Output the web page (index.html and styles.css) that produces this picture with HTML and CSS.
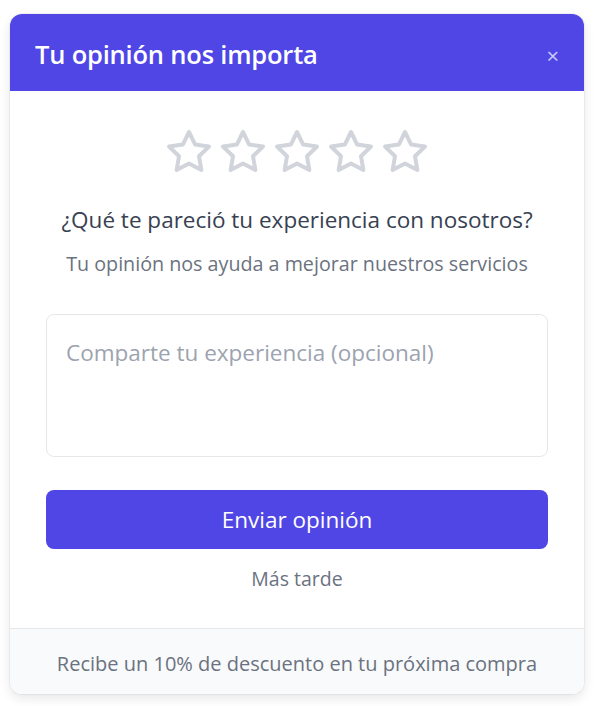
FILE: index.html
```html
<!DOCTYPE html>
<html lang="es">
<head>
<meta charset="utf-8">
<link rel="stylesheet" href="styles.css">
</head>
<body>
<div class="page">
  <div class="card">
    <div class="header">
      <h1 class="title">Tu opinión nos importa</h1>
      <button class="close" aria-label="Cerrar">×</button>
    </div>
    <div class="body">
      <div class="stars">
        <svg class="star" viewBox="0 0 24 24"><polygon points="12 2 15.09 8.26 22 9.27 17 14.14 18.18 21.02 12 17.77 5.82 21.02 7 14.14 2 9.27 8.91 8.26 12 2"/></svg>
        <svg class="star" viewBox="0 0 24 24"><polygon points="12 2 15.09 8.26 22 9.27 17 14.14 18.18 21.02 12 17.77 5.82 21.02 7 14.14 2 9.27 8.91 8.26 12 2"/></svg>
        <svg class="star" viewBox="0 0 24 24"><polygon points="12 2 15.09 8.26 22 9.27 17 14.14 18.18 21.02 12 17.77 5.82 21.02 7 14.14 2 9.27 8.91 8.26 12 2"/></svg>
        <svg class="star" viewBox="0 0 24 24"><polygon points="12 2 15.09 8.26 22 9.27 17 14.14 18.18 21.02 12 17.77 5.82 21.02 7 14.14 2 9.27 8.91 8.26 12 2"/></svg>
        <svg class="star" viewBox="0 0 24 24"><polygon points="12 2 15.09 8.26 22 9.27 17 14.14 18.18 21.02 12 17.77 5.82 21.02 7 14.14 2 9.27 8.91 8.26 12 2"/></svg>
      </div>
      <p class="question">¿Qué te pareció tu experiencia con nosotros?</p>
      <p class="sub">Tu opinión nos ayuda a mejorar nuestros servicios</p>
      <textarea class="comment" placeholder="Comparte tu experiencia (opcional)"></textarea>
      <button class="submit">Enviar opinión</button>
      <button class="later">Más tarde</button>
    </div>
    <div class="footer">Recibe un 10% de descuento en tu próxima compra</div>
  </div>
</div>
</body>
</html>
```
FILE: styles.css
```css
* { box-sizing: border-box; }
html, body {
  margin: 0;
  padding: 0;
  background: #ffffff;
  font-family: "Open Sans", "Noto Sans", sans-serif;
}
.page {
  padding: 14px 16px 12px 10px;
}
.card {
  width: 574px;
  background: #ffffff;
  border-radius: 12px;
  overflow: hidden;
  box-shadow: 0 4px 12px rgba(0, 0, 0, 0.10), 0 0 0 1px rgba(0, 0, 0, 0.04);
}
.header {
  height: 77px;
  background: #4f46e5;
  display: flex;
  align-items: center;
  justify-content: space-between;
  padding: 2px 25px 0 25px;
}
.title {
  margin: 0;
  color: #ffffff;
  font-size: 25.5px;
  font-weight: 600;
  letter-spacing: -0.2px;
}
.close {
  background: none;
  border: 0;
  padding: 0;
  color: rgba(255, 255, 255, 0.72);
  font-size: 22px;
  line-height: 1;
  font-family: "Open Sans", sans-serif;
  cursor: pointer;
  margin-top: 2px;
}
.body {
  padding: 37px 36px 35px;
  display: flex;
  flex-direction: column;
  align-items: center;
}
.stars {
  display: flex;
  gap: 6px;
}
.star {
  width: 48px;
  height: 48px;
  fill: none;
  stroke: #d1d5db;
  stroke-width: 2;
  stroke-linejoin: round;
  stroke-linecap: round;
}
.question {
  margin: 28px 0 0;
  font-size: 22.5px;
  line-height: 32px;
  color: #374151;
}
.sub {
  margin: 14px 0 0;
  font-size: 19.7px;
  line-height: 28px;
  color: #6b7280;
}
.comment {
  margin-top: 36px;
  width: 100%;
  height: 143px;
  border: 1px solid #e5e7eb;
  border-radius: 8px;
  padding: 22px 19px;
  font-family: inherit;
  font-size: 22.5px;
  line-height: 32px;
  color: #374151;
  resize: none;
  outline: none;
}
.comment::placeholder {
  color: #9ca3af;
}
.submit {
  margin-top: 33px;
  width: 100%;
  height: 59px;
  border: 0;
  border-radius: 8px;
  background: #4f46e5;
  color: #ffffff;
  font-family: inherit;
  font-size: 22.5px;
  cursor: pointer;
}
.later {
  margin-top: 16px;
  background: none;
  border: 0;
  padding: 0;
  font-family: inherit;
  font-size: 19.5px;
  line-height: 28px;
  color: #6b7280;
  cursor: pointer;
}
.footer {
  height: 66px;
  padding-top: 4px;
  border-top: 1px solid #e5e7eb;
  background: #f9fafb;
  display: flex;
  align-items: center;
  justify-content: center;
  font-size: 20px;
  color: #6b7280;
}
```
